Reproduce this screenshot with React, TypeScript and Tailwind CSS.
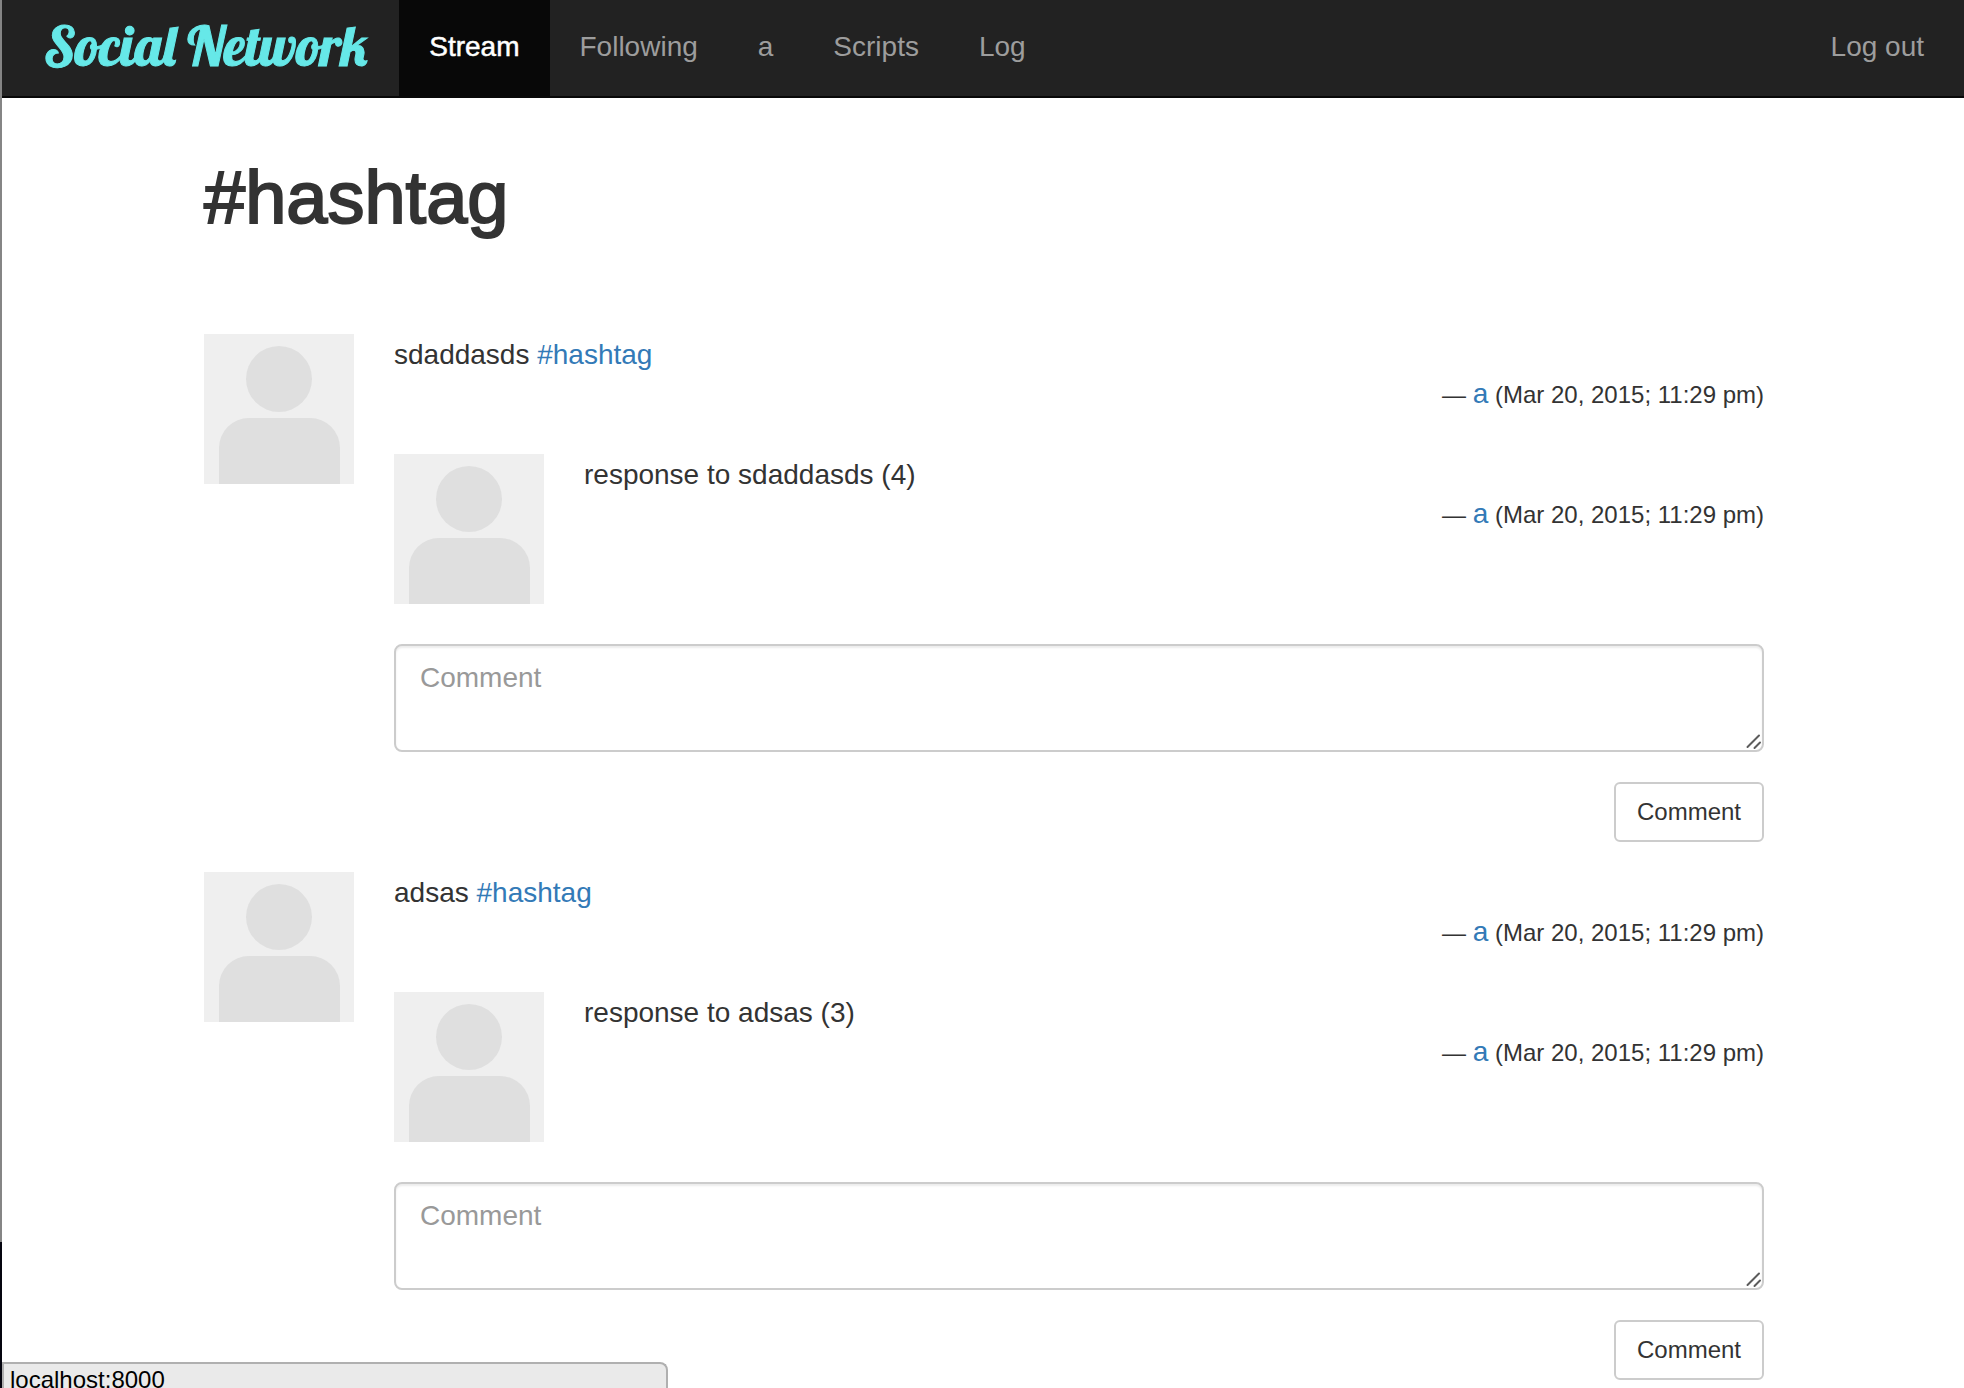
import React from "react";

type Post = { id: string; text: string; reply: string };

const posts: Post[] = [
  { id: "first", text: "sdaddasds", reply: "response to sdaddasds (4)" },
  { id: "second", text: "adsas", reply: "response to adsas (3)" },
];

const navItems = ["Stream", "Following", "a", "Scripts", "Log"];

function Avatar() {
  return (
    <svg viewBox="0 0 150 150" className="size-[150px] shrink-0" aria-hidden="true">
      <rect width="150" height="150" fill="#efefef" />
      <circle cx="75" cy="45" r="33" fill="#dfdfdf" />
      <path d="M15 150V114a30 30 0 0 1 30-30H106a30 30 0 0 1 30 30V150Z" fill="#dfdfdf" />
    </svg>
  );
}

function Byline() {
  return (
    <footer className="text-right text-[24px] leading-[38px]">
      —{" "}
      <a href="#a" className="text-[28px] leading-[20px] text-[#337ab7]">
        a
      </a>{" "}
      (Mar 20, 2015; 11:29 pm)
    </footer>
  );
}

function CommentForm({ id }: { id: string }) {
  return (
    <form className="flex flex-col items-end gap-[30px]" onSubmit={(e) => e.preventDefault()}>
      <div className="relative flex w-full">
        <textarea
          id={`comment-${id}`}
          aria-label="Comment"
          placeholder="Comment"
          className="h-[108px] w-full resize-none rounded-lg border-2 border-[#cccccc] bg-white px-6 py-3 text-[28px] leading-[40px] shadow-[inset_0_2px_2px_rgba(0,0,0,0.075)] outline-none placeholder:text-[#999999]"
        />
        <svg
          viewBox="0 0 16 16"
          className="pointer-events-none absolute right-[2px] bottom-[2px] size-4"
          fill="none"
          stroke="#5c5c5c"
          strokeWidth="2"
          strokeLinecap="round"
          aria-hidden="true"
        >
          <path d="M1.500 13 13 1.500M8.500 14 14 8.500" />
        </svg>
      </div>
      <button
        type="submit"
        className="rounded-md border-2 border-[#cccccc] bg-white px-[21px] py-2 text-[24px] leading-[40px]"
      >
        Comment
      </button>
    </form>
  );
}

function PostItem({ post }: { post: Post }) {
  return (
    <article className="flex items-start gap-10">
      <Avatar />
      <div className="min-w-0 flex-1">
        <p className="leading-[42px]">
          {post.text}{" "}
          <a href="#hashtag" className="text-[#337ab7]">
            #hashtag
          </a>
        </p>
        <Byline />
        <div className="my-10 flex items-start gap-10">
          <Avatar />
          <div className="min-w-0 flex-1">
            <p className="leading-[42px]">{post.reply}</p>
            <Byline />
          </div>
        </div>
        <CommentForm id={post.id} />
      </div>
    </article>
  );
}

export default function App() {
  return (
    <div className="relative min-h-screen bg-white font-['Liberation_Sans',Arial,sans-serif] text-[28px] leading-[40px] text-[#333333]">
      <nav className="flex items-stretch border-b-2 border-[#080808] bg-[#222222] text-[#9d9d9d]">
        <a
          href="#home"
          className="flex items-center pr-8 pb-1 pl-11 font-['Lobster','Liberation_Serif',serif] text-[55px] leading-[40px] whitespace-nowrap text-[#66e8e8] [-webkit-text-stroke:1px_#66e8e8]"
        >
          Social Network
        </a>
        {navItems.map((item) => (
          <a
            key={item}
            href={`#${item.toLowerCase()}`}
            className={
              item === "Stream"
                ? "bg-[#080808] px-[30px] pt-[27px] pb-[29px] text-white [-webkit-text-stroke:0.5px_white]"
                : "px-[30px] pt-[27px] pb-[29px]"
            }
          >
            {item}
          </a>
        ))}
        <a href="#logout" className="ml-auto px-10 pt-[27px] pb-[29px]">
          Log out
        </a>
      </nav>

      <main className="pt-[60px] pr-[200px] pl-[204px]">
        <h1 className="mb-24 text-[74px] leading-[80px] [-webkit-text-stroke:2px_#333333]">#hashtag</h1>
        <div className="flex flex-col gap-[30px]">
          {posts.map((post) => (
            <PostItem key={post.id} post={post} />
          ))}
        </div>
      </main>

      <div className="absolute inset-y-0 left-0 flex w-[2px] flex-col">
        <div className="flex-1 bg-[#858585]" />
        <div className="h-[146px] bg-[#05050f]" />
      </div>
      <div className="fixed bottom-0 left-[2px] h-[26px] w-full max-w-[666px] overflow-hidden rounded-tr-lg border-t-2 border-r-2 border-l-2 border-[#b0b0b0] bg-[#eaeaea] pl-[6px] text-[24px] leading-[32px] text-black">
        localhost:8000
      </div>
    </div>
  );
}
